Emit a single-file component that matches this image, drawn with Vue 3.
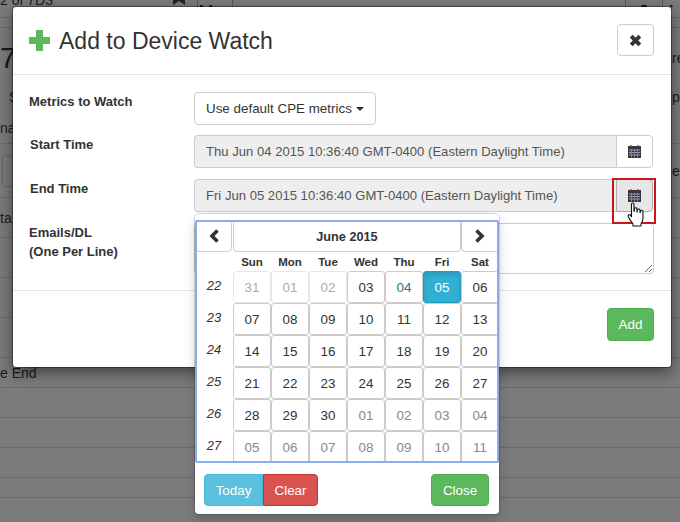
<template>
  <div class="page">
    <!-- page behind the backdrop -->
    <div class="behind">
      <div class="bg-row top">
        <span class="bg-crumb">2 of 7D3</span>
        <span class="bg-tool">
          <svg width="14" height="14" viewBox="0 0 14 14"><path d="M1 -2 L7 -6 L13 -2 L13 5 L7 1 L1 5 Z" fill="#222" /></svg>
        </span>
        <span class="bg-search">
          <svg width="18" height="8" viewBox="0 0 18 8"><circle cx="8" cy="-1" r="5" fill="none" stroke="#111" stroke-width="2.5" /><path d="M12 3 L16 7" stroke="#111" stroke-width="2.5" /></svg>
        </span>
        <span class="bg-fill"></span>
        <span class="bg-star">
          <svg width="36" height="8" viewBox="0 0 36 8"><path d="M12 7 L16 0 L20 0 L24 7 Z" fill="#111" /></svg>
        </span>
        <span class="bg-end">
          <svg width="18" height="8" viewBox="0 0 18 8"><circle cx="14" cy="-1" r="6" fill="none" stroke="#111" stroke-width="2" /></svg>
        </span>
      </div>
      <div
        v-for="(row, i) in bgRows"
        :key="i"
        class="bg-row"
        :class="{ lined: row.line }"
        :style="{ height: row.h + 'px' }"
      >
        <span :class="row.leftClass">{{ row.left }}</span>
        <span v-if="row.box" class="bg-box"></span>
        <span class="bg-right">{{ row.right }}</span>
      </div>
    </div>

    <div class="modal">
      <div class="modal-header">
        <h3 class="modal-title">
          <svg class="plus" width="21" height="21" viewBox="0 0 21 21">
            <path d="M7 0 H14 V7 H21 V14 H14 V21 H7 V14 H0 V7 H7 Z" fill="#5cb85c" />
          </svg>
          Add to Device Watch
        </h3>
        <button class="btn close-btn">
          <svg width="13" height="13" viewBox="0 0 13 13">
            <path d="M2.2 2.2 L10.8 10.8 M10.8 2.2 L2.2 10.8" stroke="#333" stroke-width="4" />
          </svg>
        </button>
      </div>

      <div class="modal-body">
        <div class="form-row">
          <label>Metrics to Watch</label>
          <button class="btn metrics-btn">Use default CPE metrics <span class="caret"></span></button>
        </div>
        <div class="form-row">
          <label class="nudge">Start Time</label>
          <div class="input-group">
            <input class="date-input" readonly value="Thu Jun 04 2015 10:36:40 GMT-0400 (Eastern Daylight Time)" />
            <button class="addon">
              <svg width="13" height="13" viewBox="0 0 13 13">
                <rect x="0" y="1" width="13" height="12" fill="#33363b" />
                <path d="M3 0 V2 M10 0 V2" stroke="#b33a3a" stroke-width="1.4" />
                <path d="M1 5 H12 M1 7.5 H12 M1 10 H12" stroke="#9aa2c4" stroke-width="1" />
                <path d="M3.5 4 V12.5 M6.5 4 V12.5 M9.5 4 V12.5" stroke="#9a7d8e" stroke-width="1" />
              </svg>
            </button>
          </div>
        </div>
        <div class="form-row late">
          <label class="nudge">End Time</label>
          <div class="input-group">
            <input class="date-input" readonly value="Fri Jun 05 2015 10:36:40 GMT-0400 (Eastern Daylight Time)" />
            <button class="addon pressed">
              <svg width="13" height="13" viewBox="0 0 13 13">
                <rect x="0" y="1" width="13" height="12" fill="#33363b" />
                <path d="M3 0 V2 M10 0 V2" stroke="#b33a3a" stroke-width="1.4" />
                <path d="M1 5 H12 M1 7.5 H12 M1 10 H12" stroke="#9aa2c4" stroke-width="1" />
                <path d="M3.5 4 V12.5 M6.5 4 V12.5 M9.5 4 V12.5" stroke="#9a7d8e" stroke-width="1" />
              </svg>
            </button>
          </div>
        </div>
        <div class="form-row late">
          <label>Emails/DL<br />(One Per Line)</label>
          <textarea class="emails"></textarea>
        </div>
      </div>

      <div class="modal-footer">
        <button class="btn btn-success">Add</button>
      </div>

      <!-- annotation box + cursor from the screenshot -->
      <div class="highlight"></div>
      <svg class="hand" width="19" height="25" viewBox="0 0 19 25">
        <path
          d="M4.5 2 C4.5 0.6 7 0.6 7 2 V10 L7.6 6.6 C8 5.4 10 5.6 10 7 V10.5 L10.6 7.6 C11 6.6 13 6.8 13 8.2 V11 L13.6 9 C14.2 8 16 8.4 16 9.8 V16 C16 19 15 20.5 14 22 V24 H6 V22 C4.5 20 2.5 17.5 1.2 14.5 C0.6 13 2.4 12 3.4 13 L4.5 15 Z"
          fill="#fff"
          stroke="#111"
          stroke-width="1.1"
        />
      </svg>

      <div class="datepicker">
        <div class="cal">
          <button class="btn cal-nav prev">
            <svg width="12" height="14" viewBox="0 0 12 14"><path d="M9.5 1.5 L4 7 L9.5 12.5" fill="none" stroke="#333" stroke-width="3.6" /></svg>
          </button>
          <button class="btn cal-title">June 2015</button>
          <button class="btn cal-nav">
            <svg width="12" height="14" viewBox="0 0 12 14"><path d="M2.5 1.5 L8 7 L2.5 12.5" fill="none" stroke="#333" stroke-width="3.6" /></svg>
          </button>

          <span></span>
          <span v-for="d in dayNames" :key="d" class="day-name">{{ d }}</span>

          <template v-for="w in weeks" :key="w.num">
            <em class="week-num">{{ w.num }}</em>
            <button
              v-for="c in w.days"
              :key="c.label"
              class="btn cell"
              :class="c.kind"
            >{{ c.label }}</button>
          </template>
        </div>
        <div class="cal-footer">
          <div class="btn-group">
            <button class="btn btn-info">Today</button>
            <button class="btn btn-danger">Clear</button>
          </div>
          <button class="btn btn-success close-cal">Close</button>
        </div>
      </div>
    </div>
  </div>
</template>

<script setup>
const bgRows = [
  { h: 10, line: true },
  { h: 60, line: false, left: "7", leftClass: "bg-big", right: "re" },
  { h: 18, line: false, left: "S", leftClass: "bg-s", right: "ple" },
  { h: 6, line: false },
  { h: 32, line: true, left: "nal", leftClass: "bg-text" },
  { h: 54, line: true, box: true, right: "ed" },
  { h: 40, line: true, left: "ta", leftClass: "bg-text" },
  { h: 40, line: true },
  { h: 40, line: true },
  { h: 40, line: true },
  { h: 30, line: true, left: "e End", leftClass: "bg-text" },
  { h: 30, line: true },
  { h: 30, line: true },
  { h: 30, line: true },
  { h: 20, line: true },
];

const dayNames = ["Sun", "Mon", "Tue", "Wed", "Thu", "Fri", "Sat"];

function week(num, labels, kinds = {}) {
  return {
    num,
    days: labels.map((label) => ({ label, kind: kinds[label] || "" })),
  };
}

const weeks = [
  week(22, ["31", "01", "02", "03", "04", "05", "06"], {
    31: "disabled",
    "01": "disabled",
    "02": "disabled",
    "04": "today",
    "05": "active",
  }),
  week(23, ["07", "08", "09", "10", "11", "12", "13"]),
  week(24, ["14", "15", "16", "17", "18", "19", "20"]),
  week(25, ["21", "22", "23", "24", "25", "26", "27"]),
  week(26, ["28", "29", "30", "01", "02", "03", "04"], {
    "01": "muted",
    "02": "muted",
    "03": "muted",
    "04": "muted",
  }),
  week(27, ["05", "06", "07", "08", "09", "10", "11"], {
    "05": "muted",
    "06": "muted",
    "07": "muted",
    "08": "muted",
    "09": "muted",
    10: "muted",
    11: "muted",
  }),
];
</script>

<style>
html,
body {
  margin: 0;
  background: #7b7b7b;
}
</style>

<style scoped>
.page {
  position: relative;
  width: 680px;
  height: 522px;
  overflow: hidden;
  background: #7b7b7b;
  font-family: "Liberation Sans", Arial, sans-serif;
  font-size: 14px;
  color: #333;
}

.behind {
  color: #1a1a1a;
}

.bg-row {
  display: flex;
  align-items: center;
  box-sizing: border-box;
}

.bg-row.lined {
  border-bottom: 1px solid #6a6a6a;
}

.bg-row.top {
  height: 18px;
  align-items: flex-start;
  border-bottom: 1px solid #6a6a6a;
}

.bg-crumb {
  width: 172px;
  margin-top: -8px;
  font-size: 14px;
}

.bg-tool {
  width: 25px;
  border-right: 1px solid #5a5a5a;
  height: 7px;
  overflow: hidden;
}

.bg-search {
  width: 34px;
  height: 7px;
  border-right: 1px solid #5a5a5a;
  overflow: hidden;
}

.bg-fill {
  width: 393px;
}

.bg-star {
  width: 36px;
  height: 7px;
  border-right: 1px solid #5a5a5a;
  border-left: 1px solid #5a5a5a;
  overflow: hidden;
}

.bg-end {
  width: 17px;
  height: 7px;
  overflow: hidden;
}

.bg-big {
  font-size: 29px;
  width: 20px;
}

.bg-s {
  padding-left: 9px;
  width: 11px;
}

.bg-text {
  font-size: 14px;
  white-space: nowrap;
}

.bg-box {
  margin-left: 2px;
  width: 20px;
  height: 30px;
  border: 1px solid #666;
  border-radius: 3px;
}

.bg-right {
  margin-left: auto;
  width: 8px;
  white-space: nowrap;
  overflow: hidden;
}

.modal {
  position: absolute;
  left: 13px;
  top: 7px;
  width: 658px;
  height: 360px;
  display: flex;
  flex-direction: column;
  background: #fff;
  border-radius: 3px;
  box-shadow: 0 0 0 1px rgba(0, 0, 0, 0.35), 0 5px 15px rgba(0, 0, 0, 0.5);
}

.modal-header {
  height: 68px;
  box-sizing: border-box;
  padding: 17px 17px 0 16px;
  display: flex;
  justify-content: space-between;
  align-items: flex-start;
  border-bottom: 1px solid #e5e5e5;
}

.modal-title {
  margin: 0;
  padding-top: 2px;
  display: flex;
  align-items: center;
  gap: 9px;
  font-size: 23px;
  font-weight: 400;
  line-height: 30px;
}

.plus {
  margin-top: -2px;
}

.btn {
  font-family: inherit;
  font-size: 13.4px;
  color: #333;
  background: #fff;
  border: 1px solid #ccc;
  border-radius: 4px;
  padding: 0;
  box-sizing: border-box;
}

.close-btn {
  width: 37px;
  height: 32px;
  display: flex;
  align-items: center;
  justify-content: center;
}

.modal-body {
  height: 216px;
  box-sizing: border-box;
  padding: 17px 17px 0 16px;
  display: flex;
  flex-direction: column;
  gap: 10px;
  border-bottom: 1px solid #e5e5e5;
}

.form-row {
  display: flex;
}

.form-row.late {
  margin-top: 1px;
}

.form-row label {
  width: 165px;
  flex: none;
  padding-top: 1px;
  font-size: 13px;
  font-weight: 700;
  line-height: 18.6px;
}

.form-row label.nudge {
  padding-left: 1px;
  width: 164px;
}

.metrics-btn {
  width: 182px;
  height: 33px;
  padding: 0 0 0 11px;
  text-align: left;
  white-space: nowrap;
}

.caret {
  display: inline-block;
  width: 0;
  height: 0;
  vertical-align: middle;
  border-top: 4px solid #333;
  border-left: 4px solid transparent;
  border-right: 4px solid transparent;
}

.input-group {
  display: flex;
  width: 459px;
  height: 33px;
}

.date-input {
  flex: 1;
  min-width: 0;
  box-sizing: border-box;
  padding: 0 11px;
  font-family: inherit;
  font-size: 13.1px;
  color: #555;
  background: #eee;
  border: 1px solid #ccc;
  border-right: none;
  border-radius: 4px 0 0 4px;
  outline: none;
}

.addon {
  width: 37px;
  background: #fff;
  border: 1px solid #ccc;
  border-radius: 0 4px 4px 0;
  padding: 0;
  display: flex;
  align-items: center;
  justify-content: center;
}

.addon.pressed {
  background: #e6e6e6;
  border-color: #adadad;
}

.emails {
  width: 460px;
  height: 51px;
  margin: 0;
  box-sizing: border-box;
  border: 1px solid #ccc;
  border-radius: 4px;
  outline: none;
}

.modal-footer {
  flex: 1;
  box-sizing: border-box;
  padding: 17px 17px 0 0;
  display: flex;
  justify-content: flex-end;
  align-items: flex-start;
}

.btn-success {
  background: #5cb85c;
  border-color: #4cae4c;
  color: #fff;
}

.btn-info {
  background: #5bc0de;
  border-color: #46b8da;
  color: #fff;
}

.btn-danger {
  background: #d9534f;
  border-color: #c9302c;
  color: #fff;
}

.modal-footer .btn-success {
  width: 47px;
  height: 33px;
}

.highlight {
  position: absolute;
  left: 599px;
  top: 171px;
  width: 44px;
  height: 46px;
  box-sizing: border-box;
  border: 2px solid #c8171c;
  z-index: 1;
}

.hand {
  position: absolute;
  left: 614px;
  top: 195px;
  z-index: 3;
}

.datepicker {
  position: absolute;
  left: 182px;
  top: 207px;
  width: 304px;
  height: 300px;
  box-sizing: border-box;
  padding-top: 6px;
  background: #fff;
  border-radius: 4px;
  box-shadow: 0 0 0 1px rgba(0, 0, 0, 0.15), 0 6px 12px rgba(0, 0, 0, 0.18);
  z-index: 2;
}

.cal {
  position: relative;
  display: grid;
  grid-template-columns: repeat(8, 38px);
  grid-template-rows: 32px 19px repeat(6, 32px);
  height: 243px;
}

.cal::after {
  content: "";
  position: absolute;
  inset: 0;
  border: 2px solid #86aeea;
  border-radius: 2px;
  pointer-events: none;
}

.cal-nav {
  display: flex;
  align-items: center;
  justify-content: center;
}

.cal-nav.prev {
  width: 37px;
}

.cal-title {
  grid-column: span 6;
  padding-top: 1px;
  font-size: 12.7px;
  font-weight: 700;
}

.day-name {
  font-size: 11.5px;
  font-weight: 700;
  text-align: center;
  line-height: 20px;
}

.week-num {
  font-size: 13px;
  line-height: 30px;
  text-align: center;
}

.cell {
  border-radius: 3px;
}

.cell.muted {
  color: #888;
}

.cell.today {
  color: #31708f;
}

.cell.disabled {
  color: #888;
  border-color: #ddd;
  opacity: 0.7;
}

.cell.active {
  color: #fff;
  background: #31b0d5;
  border-color: #269abc;
  box-shadow: inset 0 3px 5px rgba(0, 0, 0, 0.125);
}

.cal-footer {
  display: flex;
  justify-content: space-between;
  padding: 11px 10px 0 9px;
}

.btn-group {
  display: flex;
}

.btn-group .btn {
  height: 32px;
}

.btn-group .btn-info {
  width: 59px;
  border-radius: 4px 0 0 4px;
}

.btn-group .btn-danger {
  width: 55px;
  border-radius: 0 4px 4px 0;
}

.close-cal {
  width: 58px;
  height: 32px;
}
</style>
